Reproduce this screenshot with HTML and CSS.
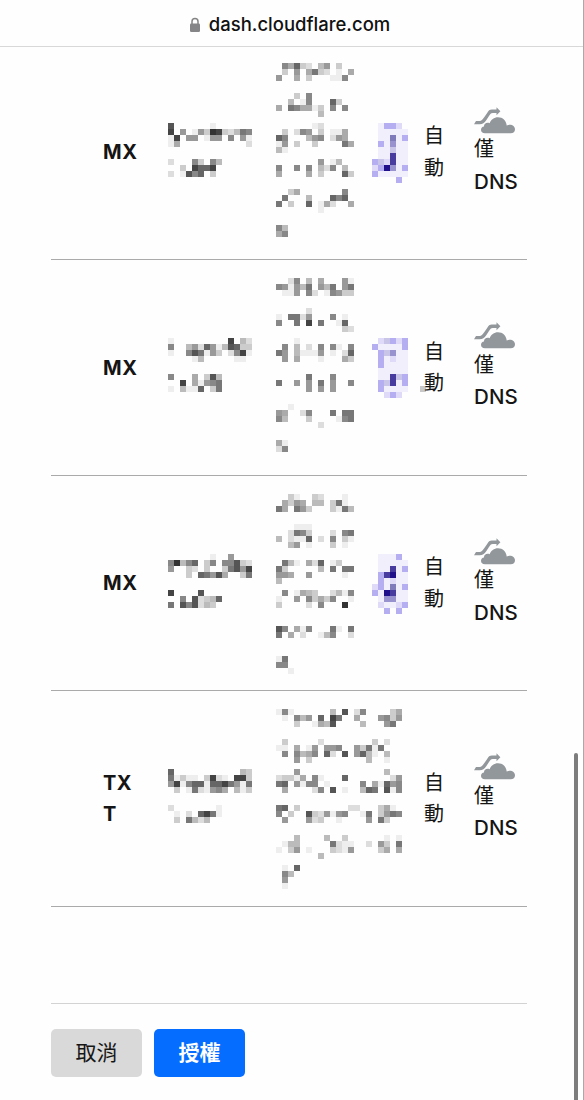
FILE: index.html
```html
<!DOCTYPE html>
<html lang="zh-Hant">
<head>
<meta charset="utf-8">
<meta name="viewport" content="width=device-width, initial-scale=1">
<title>dash.cloudflare.com</title>
<link rel="stylesheet" href="styles.css">
</head>
<body>
<header class="address">
  <svg class="lock" width="12" height="16" viewBox="0 0 12 16"><path d="M3 7V4.5a3 3 0 0 1 6 0V7" fill="none" stroke="#858587" stroke-width="1.5"/><rect x="1" y="6.5" width="10" height="8.5" rx="1.3" fill="#858587"/></svg>
  <span>dash.cloudflare.com</span>
</header>
<svg class="defs" width="0" height="0">
  <symbol id="dns-only" viewBox="0 0 42 27">
    <path d="M0 17.2L2 14.1H5.7C7.5 14.1 8.3 12.6 10 10.6L13 6.3C14.6 3.3 15.5 2.5 18 2.5H22.5V.3L26.4 4.2L22.5 8.2V5.9H18.8C16.8 5.9 16.4 7 15 9L12.4 13C10.3 16 8.7 17.2 5.7 17.2Z"/>
    <path d="M11 26.2C8.4 26.2 7 24.8 7 22.7C7 20.7 8.3 19.6 10 19.4C9.8 16.6 12.9 14.8 15.6 16.2C17 12.6 20 10.2 24 10.2C28.7 10.2 32.3 13.6 32.7 18.4C37.2 16.6 41 18.9 41 22.3C41 24.8 39.3 26.2 36.8 26.2Z"/>
  </symbol>
</svg>
<main class="content">
  <section class="records">
    <div class="record">
      <div class="type">MX</div><div class="mosaic name" data-mosaic="name0"></div><div class="mosaic value" data-mosaic="value0"></div><div class="mosaic priority" data-mosaic="priority0"></div>
      <div class="ttl">自<br>動</div><div class="proxy"><svg class="cloud"><use href="#dns-only"/></svg><span>僅</span><span class="dns">DNS</span></div>
    </div>
    <div class="record">
      <div class="type">MX</div><div class="mosaic name" data-mosaic="name1"></div><div class="mosaic value" data-mosaic="value1"></div><div class="mosaic priority" data-mosaic="priority1"></div>
      <div class="ttl">自<br>動</div><div class="proxy"><svg class="cloud"><use href="#dns-only"/></svg><span>僅</span><span class="dns">DNS</span></div>
    </div>
    <div class="record">
      <div class="type">MX</div><div class="mosaic name" data-mosaic="name2"></div><div class="mosaic value" data-mosaic="value2"></div><div class="mosaic priority" data-mosaic="priority2"></div>
      <div class="ttl">自<br>動</div><div class="proxy"><svg class="cloud"><use href="#dns-only"/></svg><span>僅</span><span class="dns">DNS</span></div>
    </div>
    <div class="record">
      <div class="type">TX<br>T</div><div class="mosaic name" data-mosaic="name3"></div><div class="mosaic value wide" data-mosaic="value3"></div>
      <div class="ttl">自<br>動</div><div class="proxy"><svg class="cloud"><use href="#dns-only"/></svg><span>僅</span><span class="dns">DNS</span></div>
    </div>
  </section>
  <footer class="actions">
    <button class="button cancel">取消</button>
    <button class="button authorize">授權</button>
  </footer>
</main>
<div class="scroll-thumb"></div>
<script src="mosaic.js"></script>
</body>
</html>
```
FILE: styles.css
```css
* { box-sizing: border-box; }
body {
  margin: 0;
  height: 1100px;
  overflow: hidden;
  position: relative;
  background: #fefefe;
  border-right: 1px solid #a9a9a9;
  color: #151515;
  font: 20px/31.5px Inter, "Noto Sans CJK TC", sans-serif;
}
.defs { display: none; }
.address {
  height: 47px;
  border-bottom: 1px solid #d8d8d8;
  display: flex;
  align-items: center;
  justify-content: center;
  gap: 8px;
  padding: 3px 4px 0 0;
  font-size: 18.5px;
  font-weight: 500;
  color: #111;
}
.content { padding: 0 56px 0 51px; }
.records {
  margin-top: -2.5px;
  height: 959.5px;
  border-bottom: 1px solid #d3d3d3;
}
.record {
  height: 215.5px;
  border-bottom: 1px solid #aaa;
  padding-left: 52px;
  display: grid;
  grid-template-columns: 65px 108px 96px 52px 50px 1fr;
}
.type, .ttl { align-self: center; padding-top: 2px; }
.type { font-weight: 700; letter-spacing: .5px; }
.name, .priority { padding-top: 78.4px; }
.value { padding-top: 18.4px; }
.wide { grid-column: span 2; }
.mosaic svg { display: block; overflow: visible; }
.proxy {
  display: flex;
  flex-direction: column;
  padding-top: 62.4px;
}
.cloud {
  width: 42px;
  height: 27px;
  margin-bottom: .6px;
  fill: #92979b;
}
.dns { font-size: 20.5px; font-weight: 450; letter-spacing: .15px; }
.actions {
  display: flex;
  gap: 12px;
  padding-top: 25px;
}
.button {
  width: 91px;
  height: 48px;
  padding: 0;
  border: 0;
  border-radius: 5px;
  font: 21px/48px Inter, "Noto Sans CJK TC", sans-serif;
}
.cancel { background: #d9d9d9; color: #161616; }
.authorize { background: #056dff; color: #fff; font-weight: 700; }
.scroll-thumb {
  position: absolute;
  left: 574px;
  top: 753px;
  width: 4px;
  height: 360px;
  border-radius: 2px;
  background: #7d7d7d;
}
```
FILE: mosaic.js
```js
// Each row is one line of 6px cells. Hex digits are grey shades, dots are empty.
const CELL = 6;
const mosaics = {
  name0: "5......e..f...|4.9.e9c34cdb78|e4.99.e99.8.9e|ea...........d|||d...8c.8b|..c.4664|d.e586.c",
  name1: "e.........4.bd|8..b9d69eb56cc|e..857e9c.d84e|....eb.....ee.|||8...a.c5b|..4.ae987|e.bee6.c7",
  name2: ".......e..9...|83b86.c8.885cd|9..cd.c..c7594|...c.6795a..c7|||4....5|..8.5dcb6|7.585dbc",
  name3: "6...........bc|7ecee.c4de.44c|94e866e66479e7|.c.e7de98a.bec|||d.......e|.e.d.647e|.c.7bdb",
  value0: ".8a6cd.b9.c..|.c.9.a7cd.e.a|9..a.c...ee8.|||...c.8|..b.e8...6c..|a.78aaec.8.8.|.......b||......ed|.c.d89.c.eea.|68...b98.d9a.|e9.c..c....7a|be||.......9.eb..|8..8.8.bd8.b.|a....a.c...6c|||..ca.......8.|.7...b...686.|7.c..6.ead..a|.......e|||8b|a8",
  value1: "..d8.b.a...9e|89e9b7.9b7.97|.ee9.8d.e89cc|||.....d|e.77d9...8.e.|8..7.4.7..e6.|...........cd||...e|.8.b.d.8.8e.8|79.beee9.e.d6|.9.a...e...ac|||.....7...8|7..9.9.7.9..8|.....9.9.9|||..e|9a..d8...7.77|8b...c....e87|.......d|||ae|d8",
  value2: "..ce..cd...e.|.ac9a.bb.c7e.|7a.79c...ce7b|||...eee|..d78c...d.87|b.dee6.d.8.ce|..b9.e...c.e.|||.7be.ad6.ec..|7c.....b.7.77|99a..9.....e.|b||.8.eabc..dbe8|e..9.8cac8..e|c....d.8...3.|||...f|58.ae8...7e.7|7.a.d..eb8..d||||e7|88|..e",
  value3: "e8e......b.5.d8....ca|.e.8b9.6.47..a...98c9|...c..eab5....b...97.|||.c.....d........c.d..|ee.a.e9.998..9c7e7...|.8.8ba8.6d.5.96be.b..|...9.c.........b..e..||...9..............b..|dccea.8e...6.......d9|76.9e88.e.....8.ae698|.a....d8.5.e..b67.5e8|||76.c........dd...cae.|8.c..5cd9e98..e7.c978|.9...9dc..e....9.7c..|||...b....b..c......e.e|.ebb.....7dee..d.9c.7|e.c9.e...cde9....ca.a|.......b||.e.6|.8b|.9|.e",
  priority0: ".accb.|.aaaaa|.aaeac|.cadaa|.aahaa|.aafaa|chbfaa|bcgdac|caaaaa|....c.",
  priority1: ".bhcbc|caaaac|.chdaa|.cabaa|.caaaa|.aaaaa|.aafhc|.chfac|.caaaa..x|..bcb.",
  priority2: ".aaac.|.aaaaa|.aafac|.cfgaa|.cabaa|bcaeac|cagfaa|.addaa|.baabc|..c.c."
};
const violet = { a: "#f1effc", b: "#dedaf7", c: "#b5aef0", d: "#9893cf", e: "#807cbc", f: "#483d9e", g: "#20108a", h: "#c9c5e9", x: "#c8c8c8" };

document.querySelectorAll("[data-mosaic]").forEach(el => {
  const key = el.dataset.mosaic;
  const rows = mosaics[key].split("|");
  const cols = Math.max(...rows.map(r => r.length));
  let cells = "";
  rows.forEach((row, y) => [...row].forEach((c, x) => {
    if (c === ".") return;
    const fill = key.startsWith("priority") ? violet[c] : "#" + c + c + c;
    cells += `<rect x="${x * CELL}" y="${y * CELL}" width="${CELL}" height="${CELL}" fill="${fill}"/>`;
  }));
  el.innerHTML = `<svg width="${cols * CELL}" height="${rows.length * CELL}" shape-rendering="crispEdges">${cells}</svg>`;
});
```
